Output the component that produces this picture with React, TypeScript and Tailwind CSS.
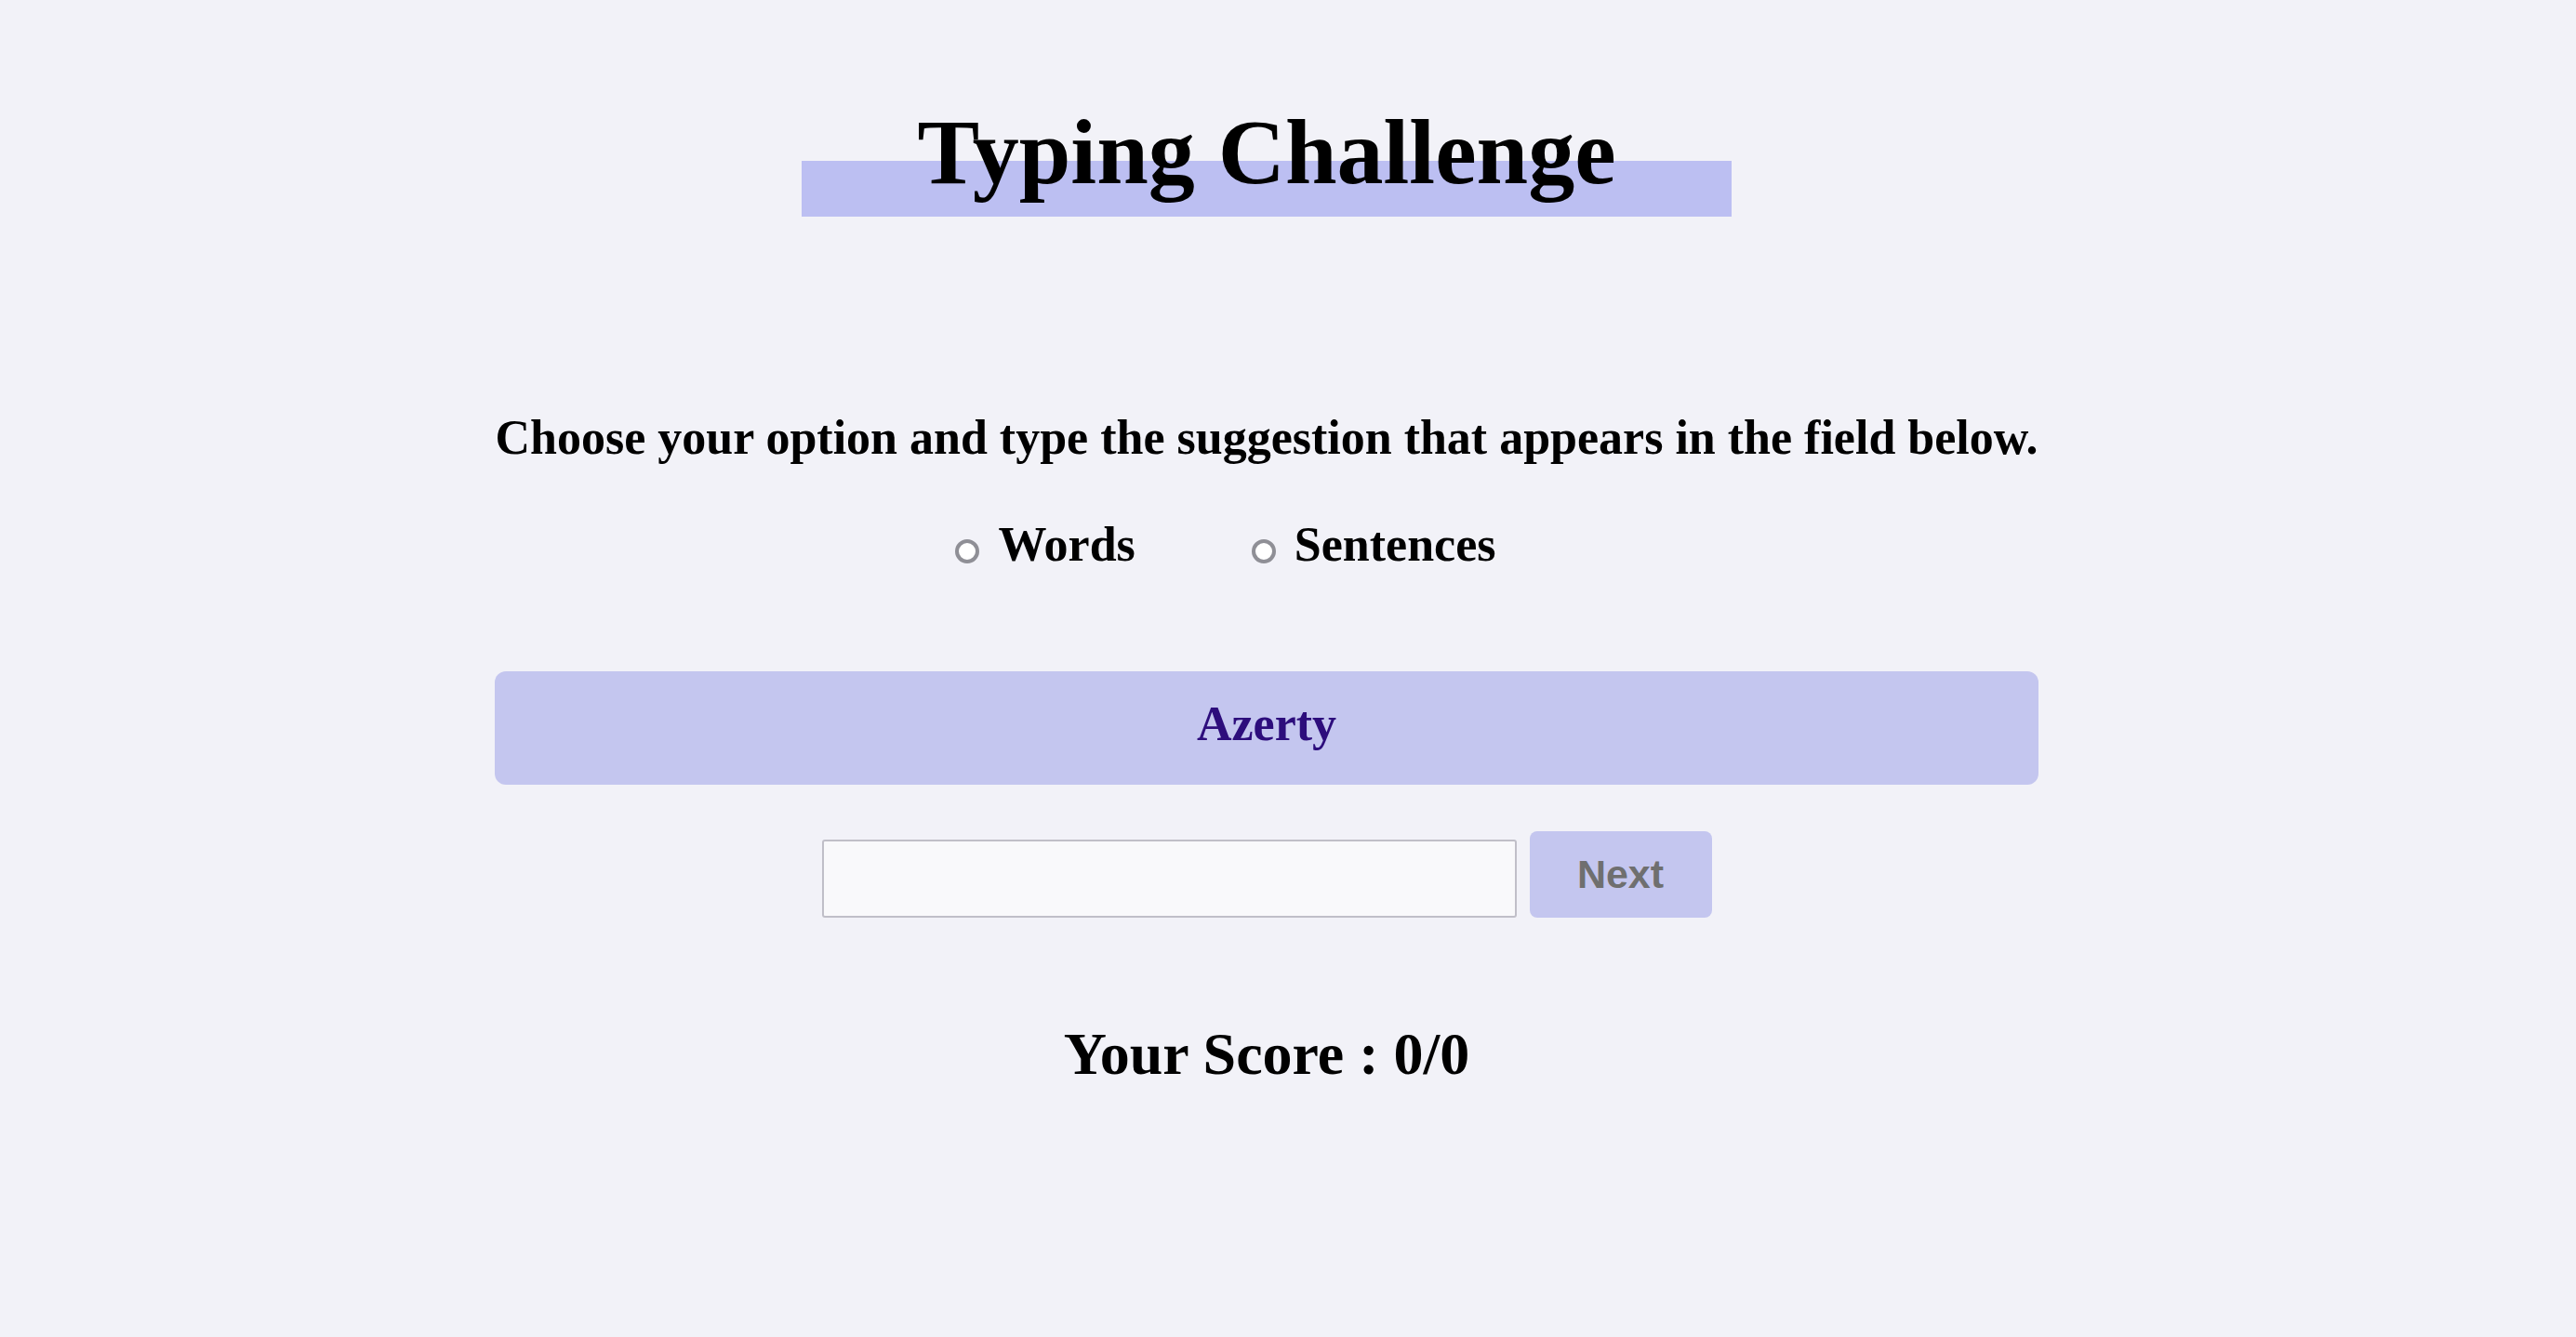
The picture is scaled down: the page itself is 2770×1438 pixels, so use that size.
import React from "react";

function Radio({ label }: { label: string }) {
  return (
    <label className="flex items-start">
      <span className="mt-[20px] block h-[26px] w-[26px] rounded-full border-[4px] border-[#8f8f96] bg-white" />
      <span className="ml-[20px] text-[52px] leading-none font-bold">{label}</span>
    </label>
  );
}

export default function App() {
  return (
    <div className="min-h-[1438px] w-full bg-[#f2f2f8] text-black [font-family:'Liberation_Serif','Times_New_Roman',serif]">
      <div className="flex w-full flex-col items-center pr-[46px] pt-[114px]">
        <div className="relative w-[1000px]">
          <div className="absolute left-0 right-0 top-[59px] h-[60px] bg-[#bcbff2]" />
          <h1 className="relative text-center text-[100px] leading-[99px] font-bold">Typing Challenge</h1>
        </div>

        <p className="mt-[232px] whitespace-nowrap text-center text-[52px] leading-none font-bold">
          Choose your option and type the suggestion that appears in the field below.
        </p>

        <div className="mt-[63px] flex items-start gap-[125px] pr-[88px]">
          <Radio label="Words" />
          <Radio label="Sentences" />
        </div>

        <div className="mt-[110px] h-[122px] w-[1660px] rounded-[12px] bg-[#c4c6ef] pt-[31px] text-center text-[52px] leading-none font-bold text-[#2d0d7c]">
          Azerty
        </div>

        <div className="mt-[50px] flex items-end gap-[14px]">
          <input
            type="text"
            className="h-[84px] w-[747px] rounded-[3px] border-2 border-[#c0bfc8] bg-[#f9f9fb] outline-none"
          />
          <button className="h-[93px] w-[196px] rounded-[8px] bg-[#c4c6ef] text-[43px] font-bold text-[#6f6f6f] [font-family:'Liberation_Sans',Arial,sans-serif]">
            Next
          </button>
        </div>

        <h2 className="mt-[115px] text-center text-[64px] leading-[63px] font-bold">Your Score : 0/0</h2>
      </div>
    </div>
  );
}
